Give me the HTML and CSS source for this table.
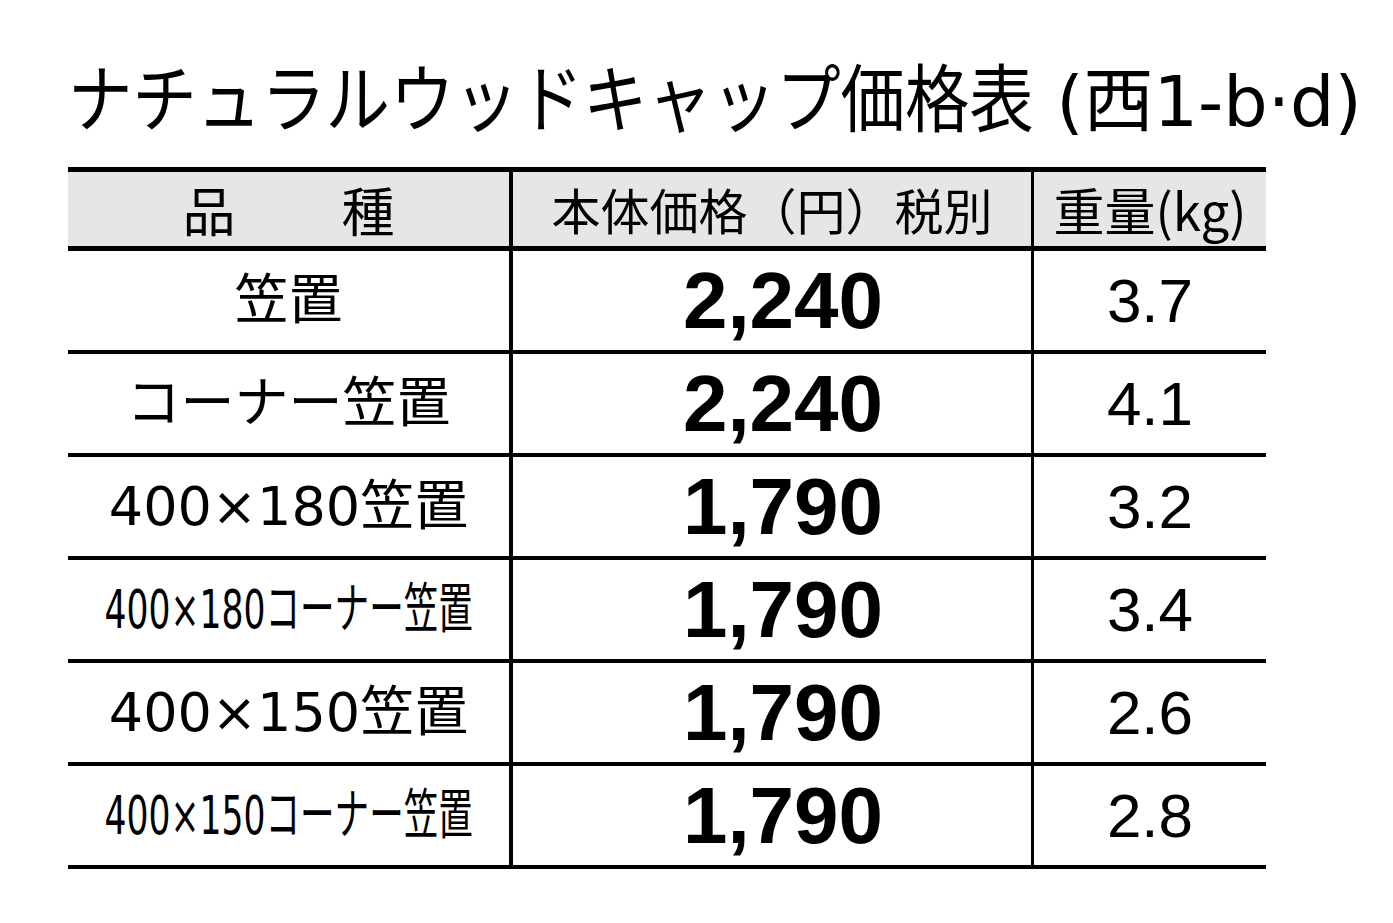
FILE: index.html
```html
<!DOCTYPE html>
<html lang="ja">
<head>
<meta charset="utf-8">
<link rel="stylesheet" href="styles.css">
</head>
<body>
<div class="page">
  <h1 class="title"><span class="title-jp">ナチュラルウッドキャップ価格表</span><span class="title-rest"> (西1-b·d)</span></h1>
  <table class="price">
    <thead>
      <tr>
        <th class="c-name">品　　種</th>
        <th class="c-price">本体価格（円）税別</th>
        <th class="c-weight">重量(kg)</th>
      </tr>
    </thead>
    <tbody>
      <tr><td class="c-name">笠置</td><td class="c-price">2,240</td><td class="c-weight">3.7</td></tr>
      <tr><td class="c-name">コーナー笠置</td><td class="c-price">2,240</td><td class="c-weight">4.1</td></tr>
      <tr><td class="c-name">400×180笠置</td><td class="c-price">1,790</td><td class="c-weight">3.2</td></tr>
      <tr><td class="c-name"><div class="fit"><span class="narrow">400×180コーナー笠置</span></div></td><td class="c-price">1,790</td><td class="c-weight">3.4</td></tr>
      <tr><td class="c-name">400×150笠置</td><td class="c-price">1,790</td><td class="c-weight">2.6</td></tr>
      <tr><td class="c-name"><div class="fit"><span class="narrow">400×150コーナー笠置</span></div></td><td class="c-price">1,790</td><td class="c-weight">2.8</td></tr>
    </tbody>
  </table>
</div>
</body>
</html>
```
FILE: styles.css
```css
html, body {
  margin: 0;
  padding: 0;
  background: #ffffff;
  color: #000000;
  font-family: "Noto Sans CJK JP", "Noto Sans", sans-serif;
}
.page {
  padding: 52px 0 0 68px;
}
.title {
  display: flex;
  align-items: baseline;
  margin: 0 0 31px 0;
  font-size: 74px;
  font-weight: 400;
  line-height: 84px;
  height: 84px;
  white-space: nowrap;
}
.title-jp {
  display: inline-block;
  transform: scaleX(0.87);
  transform-origin: left center;
  margin-right: -144px;
}
.title-rest {
  font-family: "DejaVu Sans", "Noto Sans CJK JP", sans-serif;
  font-size: 70px;
  white-space: pre;
}
.price {
  border-collapse: collapse;
  width: 1197px;
  table-layout: fixed;
}
.price th, .price td {
  padding: 0;
  text-align: center;
  vertical-align: middle;
  white-space: nowrap;
}
.price .c-name { width: 441px; }
.price .c-price { width: 518px; }
.price .c-weight { width: 232px; }
.price thead tr {
  border-top: 5px solid #000;
  border-bottom: 5px solid #000;
  background: #e6e6e6;
}
.price th {
  height: 74px;
  font-size: 49px;
  line-height: 60px;
  font-weight: 400;
}
.price th.c-name {
  font-size: 53px;
}
.price th.c-weight {
  font-size: 51px;
}
.price tbody tr {
  border-bottom: 4px solid #000;
}
.price td {
  height: 99px;
  font-size: 54px;
  line-height: 80px;
}
.price td.c-name {
  font-family: "DejaVu Sans", "Noto Sans CJK JP", sans-serif;
}
.price th.c-name, .price td.c-name {
  border-right: 4px solid #000;
}
.price th.c-price, .price td.c-price {
  border-right: 3px solid #000;
}
.price td.c-price {
  font-family: "Liberation Sans", Arial, sans-serif;
  font-weight: 700;
  font-size: 80px;
  padding-left: 22px;
}
.price td.c-weight {
  font-family: "Liberation Sans", Arial, sans-serif;
  font-size: 62px;
}
.fit {
  display: flex;
  justify-content: center;
}
.narrow {
  display: inline-block;
  transform: scaleX(0.64);
}
```
